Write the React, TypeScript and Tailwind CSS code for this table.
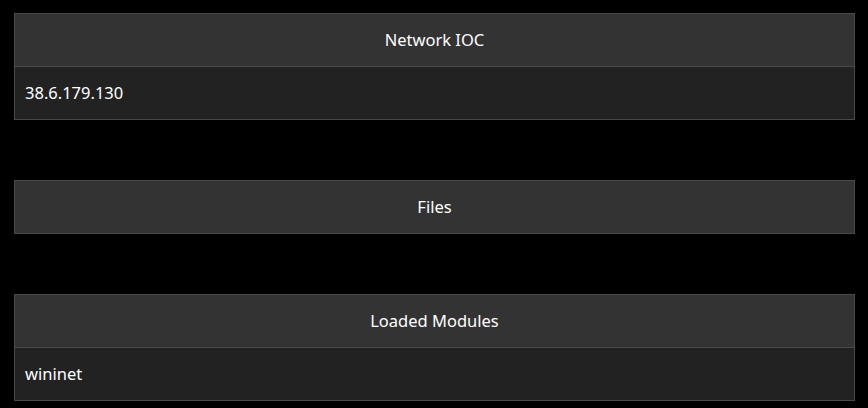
const sections: { title: string; items: string[] }[] = [
  { title: "Network IOC", items: ["38.6.179.130"] },
  { title: "Files", items: [] },
  { title: "Loaded Modules", items: ["wininet"] },
];

function Panel({ title, items }: { title: string; items: string[] }) {
  return (
    <div className="border border-[#4a4a4a] bg-[#222222]">
      <div className="flex h-[52px] items-center justify-center bg-[#333333] text-[16.5px] text-white">
        {title}
      </div>
      {items.map((item) => (
        <div
          key={item}
          className="flex h-[53px] items-center border-t border-[#4a4a4a] px-[10px] text-[16.5px] text-white"
        >
          {item}
        </div>
      ))}
    </div>
  );
}

export default function App() {
  return (
    <div
      className="min-h-screen bg-black pt-[13px] pl-[14px] pr-[13px]"
      style={{ fontFamily: '"Noto Sans", "Open Sans", sans-serif' }}
    >
      <div className="flex flex-col gap-[60px]">
        {sections.map((s) => (
          <Panel key={s.title} title={s.title} items={s.items} />
        ))}
      </div>
    </div>
  );
}
